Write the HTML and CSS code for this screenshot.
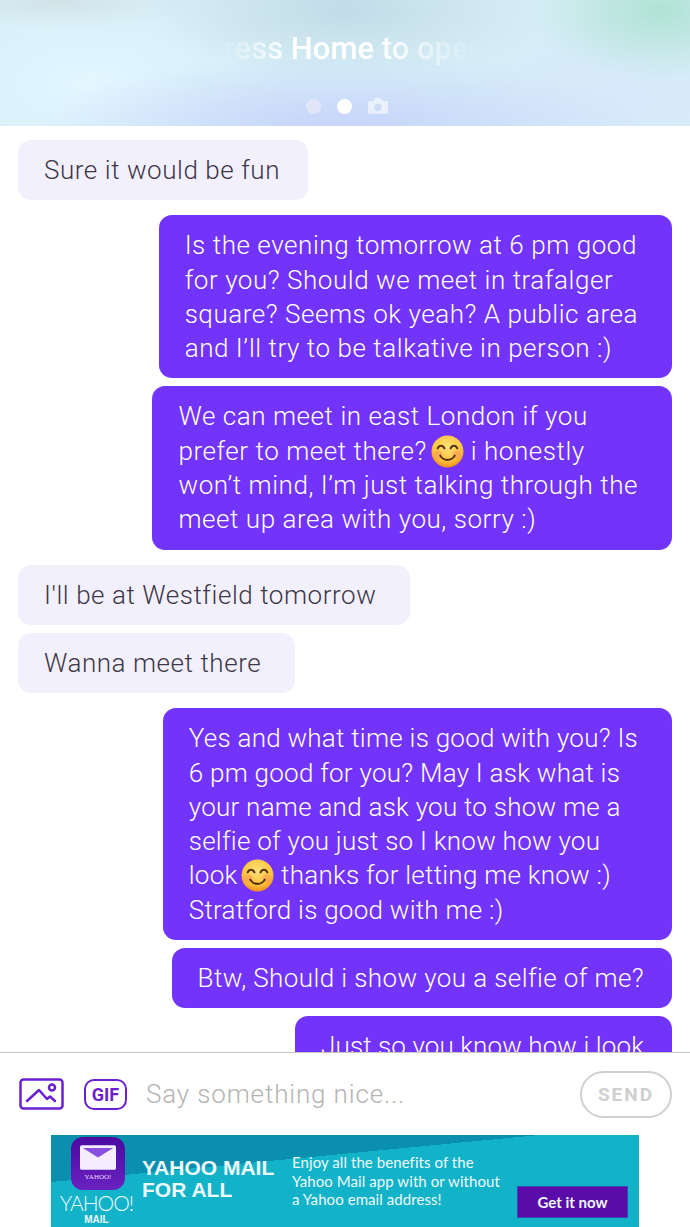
FILE: index.html
```html
<!DOCTYPE html>
<html>
<head>
    <title>Chat</title>
    <link rel="stylesheet" href="styles.css">
</head>
<body>
    <div class="lock-banner">
        <div class="press-home">Press Home to open</div>
        <div class="page-dots">
            <span class="dot"></span>
            <span class="dot dot-active"></span>
            <svg class="camera" width="20" height="16" viewBox="0 0 22 17">
                <path d="M2 3h4l1.500-3h7l1.500 3h4a2 2 0 0 1 2 2v10a2 2 0 0 1-2 2H2a2 2 0 0 1-2-2V5a2 2 0 0 1 2-2z" fill="#fff"/>
                <circle cx="11" cy="10" r="4" fill="#cfdcf5"/>
            </svg>
        </div>
    </div>

    <div class="messages">
        <div class="bubble received tight first">Sure it would be fun</div>

        <div class="bubble sent sep">Is the evening tomorrow at 6 pm good<br>for you? Should we meet in trafalger<br>square? Seems ok yeah? A public area<br>and I’ll try to be talkative in person :)</div>
        <div class="bubble sent">We can meet in east London if you<br>prefer to meet there?<svg class="emoji" viewBox="0 0 32 32"><use href="#smile"/></svg> i honestly<br>won’t mind, I’m just talking through the<br>meet up area with you, sorry :)</div>

        <div class="bubble received sep">I'll be at Westfield tomorrow</div>
        <div class="bubble received">Wanna meet there</div>

        <div class="bubble sent sep snug">Yes and what time is good with you? Is<br>6 pm good for you? May I ask what is<br>your name and ask you to show me a<br>selfie of you just so I know how you<br>look<svg class="emoji" viewBox="0 0 32 32"><use href="#smile"/></svg> thanks for letting me know :)<br>Stratford is good with me :)</div>
        <div class="bubble sent tight snug-mid">Btw, Should i show you a selfie of me?</div>
        <div class="bubble sent tight snug-most">Just so you know how i look</div>
    </div>

    <div class="composer">
        <svg class="icon-photo" width="45" height="32" viewBox="0 0 45 32" fill="none" stroke="#6a1fd0" stroke-width="2.500" stroke-linecap="round" stroke-linejoin="round">
            <rect x="1.500" y="1.500" width="42" height="29" rx="3"/>
            <path d="M8 23l12-11 8 9 3-2.500 5 4.500"/>
            <circle cx="33" cy="9.500" r="3"/>
        </svg>
        <div class="icon-gif">GIF</div>
        <div class="placeholder">Say something nice...</div>
        <div class="send">SEND</div>
    </div>

    <div class="ad">
        <div class="ad-logo">
            <div class="ad-app">
                <svg width="36" height="25" viewBox="0 0 38 26">
                    <rect width="38" height="26" rx="2" fill="#f4ecff"/>
                    <path d="M3 3h32L19 13z" fill="#8a4fe0"/>
                </svg>
                <span class="ad-app-name">YAHOO!</span>
            </div>
            <div class="ad-brand">YAHOO!</div>
            <div class="ad-brand-sub">MAIL</div>
        </div>
        <div class="ad-title">YAHOO MAIL<br>FOR ALL</div>
        <div class="ad-copy">Enjoy all the benefits of the<br>Yahoo Mail app with or without<br>a Yahoo email address!</div>
        <div class="ad-button">Get it now</div>
    </div>

    <svg class="defs" width="0" height="0">
        <defs>
            <radialGradient id="face" cx="50%" cy="35%" r="65%">
                <stop offset="0" stop-color="#ffe27a"/>
                <stop offset="0.7" stop-color="#fcc23c"/>
                <stop offset="1" stop-color="#ee8d1f"/>
            </radialGradient>
            <g id="smile">
                <circle cx="16" cy="16" r="15.500" fill="url(#face)"/>
                <circle cx="7" cy="19" r="4" fill="#f79a5a" opacity="0.6"/>
                <circle cx="25" cy="19" r="4" fill="#f79a5a" opacity="0.6"/>
                <path d="M6.500 13c1.500-3.500 5-3.500 6.500 0M19 13c1.500-3.500 5-3.500 6.500 0" fill="none" stroke="#5b3510" stroke-width="2" stroke-linecap="round"/>
                <path d="M9 20c3 5.500 11 5.500 14 0" fill="none" stroke="#5b3510" stroke-width="2" stroke-linecap="round"/>
            </g>
        </defs>
    </svg>
</body>
</html>
```

FILE: styles.css
```css
html, body {
    margin: 0;
    height: 100%;
}

body {
    width: 690px;
    height: 1227px;
    overflow: hidden;
    display: flex;
    flex-direction: column;
    background: #fff;
    font-family: "Roboto", "Noto Sans", sans-serif;
}

/* blurred lock screen strip */
.lock-banner {
    height: 126px;
    flex: none;
    display: flex;
    flex-direction: column;
    align-items: center;
    background:
        radial-gradient(ellipse 130px 70px at 660px 10px, #b0e2d4 0%, rgba(176, 226, 212, 0) 100%),
        radial-gradient(ellipse 310px 75px at 340px 130px, #c6d3fb 0%, rgba(198, 211, 251, 0) 100%),
        radial-gradient(ellipse 200px 70px at 345px 10px, #c2dce7 0%, rgba(194, 220, 231, 0) 100%),
        radial-gradient(ellipse 130px 30px at 60px 0, #d2e2e8 0%, rgba(210, 226, 232, 0) 100%),
        radial-gradient(ellipse 200px 110px at 90px 85px, #e2f7ff 0%, rgba(226, 247, 255, 0) 100%),
        radial-gradient(ellipse 180px 90px at 620px 100px, #d8e9fb 0%, rgba(216, 233, 251, 0) 100%),
        #d6eef7;
}

.press-home {
    margin-top: 32px;
    width: 300px;
    text-align: center;
    white-space: nowrap;
    font-size: 31px;
    line-height: 34px;
    font-weight: 500;
    color: #fff;
    -webkit-mask-image: linear-gradient(to right, transparent 8%, #000 32%, #000 60%, transparent 95%);
    mask-image: linear-gradient(to right, transparent 8%, #000 32%, #000 60%, transparent 95%);
}

.page-dots {
    margin-top: 32px;
    padding-left: 3px;
    display: flex;
    align-items: center;
    gap: 16px;
}

.dot {
    width: 15px;
    height: 15px;
    border-radius: 50%;
    background: #e0e6f8;
}

.dot-active {
    background: #fff;
}

.camera {
    opacity: 0.6;
}

/* conversation */
.messages {
    flex: 1;
    min-height: 0;
    overflow: hidden;
    display: flex;
    flex-direction: column;
    align-items: flex-start;
    gap: 8px;
    padding: 14px 18px 0;
}

.bubble {
    flex: none;
    padding: 13px 34px 13px 26px;
    border-radius: 13px;
    font-size: 26px;
    font-weight: 300;
    letter-spacing: 0.550px;
    line-height: 34.300px;
    white-space: nowrap;
}

.received {
    background: #f3f0fd;
    color: #3e3848;
}

.sent {
    align-self: flex-end;
    background: #7233fb;
    color: #fff;
}

.tight {
    padding-right: 28px;
}

.snug {
    letter-spacing: 0.250px;
}

.snug-mid {
    letter-spacing: 0.400px;
}

.snug-most {
    letter-spacing: 0.100px;
}

.sep {
    margin-top: 7px;
}

.first {
    margin-top: 0;
}

.emoji {
    width: 33px;
    height: 33px;
    margin-left: 4px;
    vertical-align: -8px;
}

/* input row */
.composer {
    height: 82px;
    flex: none;
    display: flex;
    align-items: center;
    padding: 0 18px 0 19px;
    border-top: 1px solid #c8c8c8;
    background: #fff;
}

.icon-photo {
    flex: none;
}

.icon-gif {
    flex: none;
    margin-left: 20px;
    width: 39px;
    height: 27px;
    border: 2.500px solid #6a1fd0;
    border-radius: 10px;
    text-align: center;
    font-size: 18px;
    line-height: 27px;
    font-weight: 700;
    color: #6a1fd0;
}

.placeholder {
    flex: 1;
    margin-left: 19px;
    font-size: 26px;
    font-weight: 300;
    letter-spacing: 0.850px;
    color: #b4b4b4;
}

.send {
    width: 88px;
    height: 43px;
    border: 2px solid #d0d0d0;
    border-radius: 24px;
    text-align: center;
    font-size: 19px;
    line-height: 43px;
    font-weight: 700;
    letter-spacing: 2px;
    color: #cfcfcf;
}

/* banner ad */
.ad {
    height: 92px;
    width: 588px;
    flex: none;
    margin-left: 51px;
    display: flex;
    overflow: hidden;
    color: #eef9fb;
    background: linear-gradient(174.500deg, #0a8fae 46.800px, #12b2c8 46.800px);
}

.ad-logo {
    width: 91px;
    flex: none;
    display: flex;
    flex-direction: column;
    align-items: center;
    padding-top: 2px;
}

.ad-app {
    width: 54px;
    height: 53px;
    margin-left: 3px;
    border-radius: 12px;
    background: linear-gradient(#4a0aa0, #6a22c0);
    display: flex;
    flex-direction: column;
    align-items: center;
    gap: 3px;
    padding-top: 8px;
    box-sizing: border-box;
}

.ad-app svg {
    flex: none;
}

.ad-app-name {
    font-family: "Liberation Serif", serif;
    font-size: 7px;
    line-height: 9px;
    color: #e6d8fb;
}

.ad-brand {
    margin-top: 2px;
    font-family: "Lato", sans-serif;
    font-size: 21px;
    line-height: 22px;
    font-weight: 300;
    letter-spacing: -1px;
}

.ad-brand-sub {
    font-family: "Liberation Sans", sans-serif;
    font-size: 10px;
    line-height: 11px;
    font-weight: 700;
}

.ad-title {
    width: 150px;
    flex: none;
    margin-top: 22px;
    font-family: "Liberation Sans", sans-serif;
    font-size: 21px;
    line-height: 22px;
    font-weight: 700;
    white-space: nowrap;
}

.ad-copy {
    margin-top: 18px;
    width: 225px;
    flex: none;
    font-family: "Lato", sans-serif;
    font-size: 15px;
    line-height: 18.500px;
    letter-spacing: 0.070px;
    white-space: nowrap;
}

.ad-button {
    width: 109px;
    height: 30px;
    flex: none;
    margin-top: 51px;
    border: 1px solid #3a44b8;
    background: #5a0ca8;
    text-align: center;
    font-family: "Lato", sans-serif;
    font-size: 15px;
    line-height: 30px;
    font-weight: 700;
}

.defs {
    position: absolute;
}
```
